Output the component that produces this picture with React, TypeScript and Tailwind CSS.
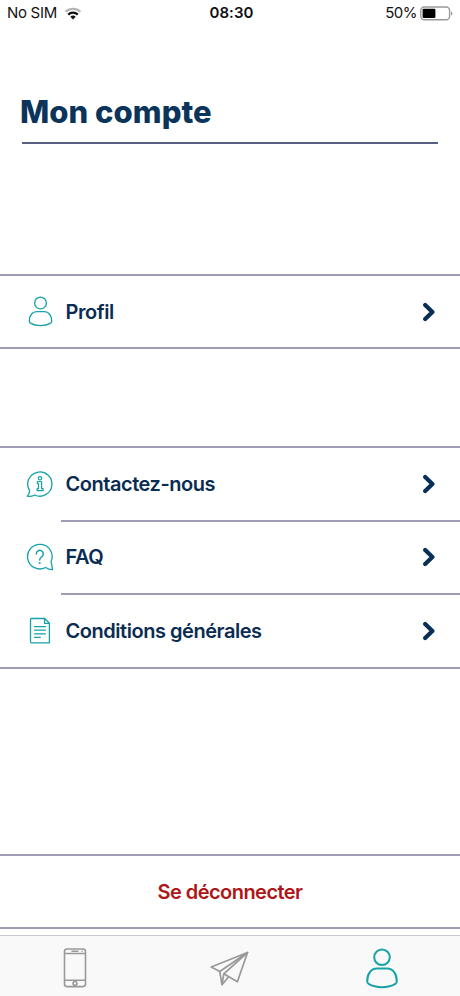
import React from 'react';

interface IconProps {
  className?: string;
  strokeWidth?: number;
}

const UserIcon: React.FC<IconProps> = ({ className, strokeWidth = 1.8 }) => (
  <svg viewBox="0 0 32 41" fill="none" stroke="currentColor" strokeWidth={strokeWidth} className={className}>
    <circle cx="16" cy="9.2" r="7.8" />
    <path d="M11 20.6h10c6 0 9.8 5.2 9.8 12.6 0 1.2-.3 2.1-1.4 2.7C26 38 21.5 39.2 16 39.2S6 38 2.6 35.9c-1.1-.6-1.4-1.5-1.4-2.7C1.2 25.8 5 20.6 11 20.6z" />
  </svg>
);

const ContactIcon: React.FC<IconProps> = ({ className }) => (
  <svg viewBox="0 0 28 28" fill="none" stroke="currentColor" strokeWidth="1.3" strokeLinejoin="round" className={className}>
    <path d="M3.5 20.4A12.1 12.1 0 1 1 8.6 25C6.500 26.2 3.7 26.7 1.2 26.2 2.9 24.7 3.7 22.7 3.5 20.4z" />
    <circle cx="14" cy="8.3" r="1.7" strokeWidth="1.2" />
    <path strokeWidth="1.2" d="M11.4 11.5h4.2v7.2h1.5v2h-6v-2h1.4v-5.1h-1.100z" />
  </svg>
);

const FaqIcon: React.FC<IconProps> = ({ className }) => (
  <svg viewBox="0 0 28 28" fill="none" stroke="currentColor" strokeWidth="1.3" strokeLinecap="round" strokeLinejoin="round" className={className}>
    <path d="M25 18.8A12.3 12.3 0 1 0 19.6 24.5C21.6 25.9 24.3 26.8 26.6 26.7 26 24.2 25.9 21.2 25 18.8z" />
    <path strokeWidth="1.5" d="M10.3 10.9a3.5 3.5 0 1 1 5.3 3c-1.3.8-1.9 1.5-1.9 3.1" />
    <circle cx="13.7" cy="20.1" r=".4" />
  </svg>
);

const TermsIcon: React.FC<IconProps> = ({ className }) => (
  <svg viewBox="0 0 28 28" fill="none" stroke="currentColor" strokeWidth="1.3" strokeLinecap="round" strokeLinejoin="round" className={className}>
    <path d="M5.5 1.5h13.1l4.8 4.8v19.5H5.5a1 1 0 0 1-1-1V2.5a1 1 0 0 1 1-1z" />
    <path d="M18.6 1.5v4.8h4.8" />
    <path d="M8.6 9.7h10.8M8.6 13.2h10.8M8.6 16.8h10.8M8.6 20.4h5.6" />
  </svg>
);

const PhoneIcon: React.FC<IconProps> = ({ className }) => (
  <svg viewBox="0 0 24 40" fill="none" stroke="currentColor" strokeWidth="1.6" className={className}>
    <rect x="1.5" y="1" width="21" height="37.6" rx="2.5" />
    <path d="M1.5 5.5h21M1.5 32.2h21M8.5 3.3h7" />
    <path d="M18.5 3.3h1.2" />
    <circle cx="12" cy="35.4" r="1.9" />
  </svg>
);

const PlaneIcon: React.FC<IconProps> = ({ className }) => (
  <svg viewBox="0 0 40 36" fill="none" stroke="currentColor" strokeWidth="1.7" strokeLinejoin="round" className={className}>
    <path d="M37.5 1.5 1.2 16l8.6 4.5z" />
    <path d="M37.5 1.5 13.8 22.8 27.400 30.8z" />
    <path d="M9.8 20.5 12 33.8 13.8 22.8M12 33.8 18.5 26" />
  </svg>
);

const ChevronIcon: React.FC = () => (
  <svg viewBox="0 0 14 20" fill="none" stroke="currentColor" strokeWidth="4.2" strokeLinecap="round" strokeLinejoin="round" className="h-[20px] w-[14px] text-[#082f55]">
    <path d="m3.200 2.900 7.200 7.100-7.200 7.100" />
  </svg>
);

interface RowProps {
  icon: React.ReactNode;
  label: string;
  inset?: boolean;
}

const Row: React.FC<RowProps> = ({ icon, label, inset }) => (
  <>
    <button className="flex h-[71.5px] w-full items-center pr-[24px] pl-[26px]">
      <span className="flex w-[28px] justify-center text-[#16a3a8]">{icon}</span>
      <span className="ml-[11.5px] flex-1 text-left text-[20px] font-semibold tracking-[-0.46px] text-[#0a2c52]">{label}</span>
      <ChevronIcon />
    </button>
    {inset && <div className="ml-[61px] h-[2px] bg-[#9d9cb4]" />}
  </>
);

const StatusBar: React.FC = () => (
  <div className="grid h-[26px] grid-cols-3 items-center px-[7px] text-[15px] text-[#111]">
    <div className="flex items-center gap-[7px]">
      <span className="tracking-[-0.3px]">No SIM</span>
      <svg viewBox="0 0 18 13" fill="none" className="h-[13px] w-[18px]">
        <path d="M1.6 4.8a10.6 10.6 0 0 1 14.8 0" stroke="#b5b5b5" strokeWidth="2.2" />
        <path d="M4.2 7.6a6.9 6.9 0 0 1 9.6 0" stroke="#111" strokeWidth="2.2" />
        <path d="M9 12.5 6.3 9.8a3.9 3.9 0 0 1 5.4 0z" fill="#111" />
      </svg>
    </div>
    <span className="pl-[3px] text-center text-[15px] font-semibold tracking-[0.05px]">08:30</span>
    <div className="flex items-center justify-end gap-[3px]">
      <span className="tracking-[-0.5px]">50%</span>
      <svg viewBox="0 0 33 15" fill="none" className="h-[15px] w-[33px]">
        <rect x=".8" y="1" width="28.8" height="12.8" rx="3.5" stroke="#999" strokeWidth="1.4" />
        <rect x="2.6" y="2.8" width="12.8" height="9.2" rx="1" fill="#000" />
        <path d="M31 5.5c1.8.5 1.8 3.5 0 4z" fill="#999" />
      </svg>
    </div>
  </div>
);

export default function App() {
  return (
    <div className="flex h-[996px] w-[460px] flex-col overflow-hidden bg-white font-['Inter',sans-serif]">
      <StatusBar />

      {/* Title */}
      <header className="mx-[22px] mt-[62px] flex h-[56px] flex-col justify-between border-b-2 border-[#56607f]">
        <h1 className="-ml-[2px] text-[31px] leading-[48px] font-extrabold tracking-[0.05px] text-[#0b345b]">Mon compte</h1>
      </header>

      <section className="mt-[130px] h-[75px] border-y-2 border-[#9d9cb4]">
        <Row icon={<UserIcon className="h-[31px] w-[25px]" />} label="Profil" />
      </section>

      <section className="mt-[97px] border-y-2 border-[#9d9cb4]">
        <Row icon={<ContactIcon className="size-[28px] shrink-0" />} label="Contactez-nous" inset />
        <Row icon={<FaqIcon className="size-[28px] shrink-0" />} label="FAQ" inset />
        <Row icon={<TermsIcon className="size-[28px] shrink-0" />} label="Conditions générales" />
      </section>

      <section className="mt-[185.5px] h-[75px] border-y-2 border-[#9d9cb4]">
        <button className="flex h-[72px] w-full items-center justify-center text-[20px] font-semibold tracking-[-0.54px] text-[#ad1717]">
          Se déconnecter
        </button>
      </section>

      {/* Tab bar */}
      <nav className="mt-auto grid h-[61px] shrink-0 grid-cols-3 border-t border-[#c9c9cd] bg-[#f9f9fa] pt-[12px] text-[#999]">
        <button className="flex justify-center pr-[3px]">
          <PhoneIcon className="h-[40px] w-[24px]" />
        </button>
        <button className="flex justify-center pt-[3px]">
          <PlaneIcon className="h-[36px] w-[40px]" />
        </button>
        <button className="flex justify-center pr-[2px] text-[#16a3a8]">
          <UserIcon className="h-[41px] w-[32px]" strokeWidth={2} />
        </button>
      </nav>
    </div>
  );
}
